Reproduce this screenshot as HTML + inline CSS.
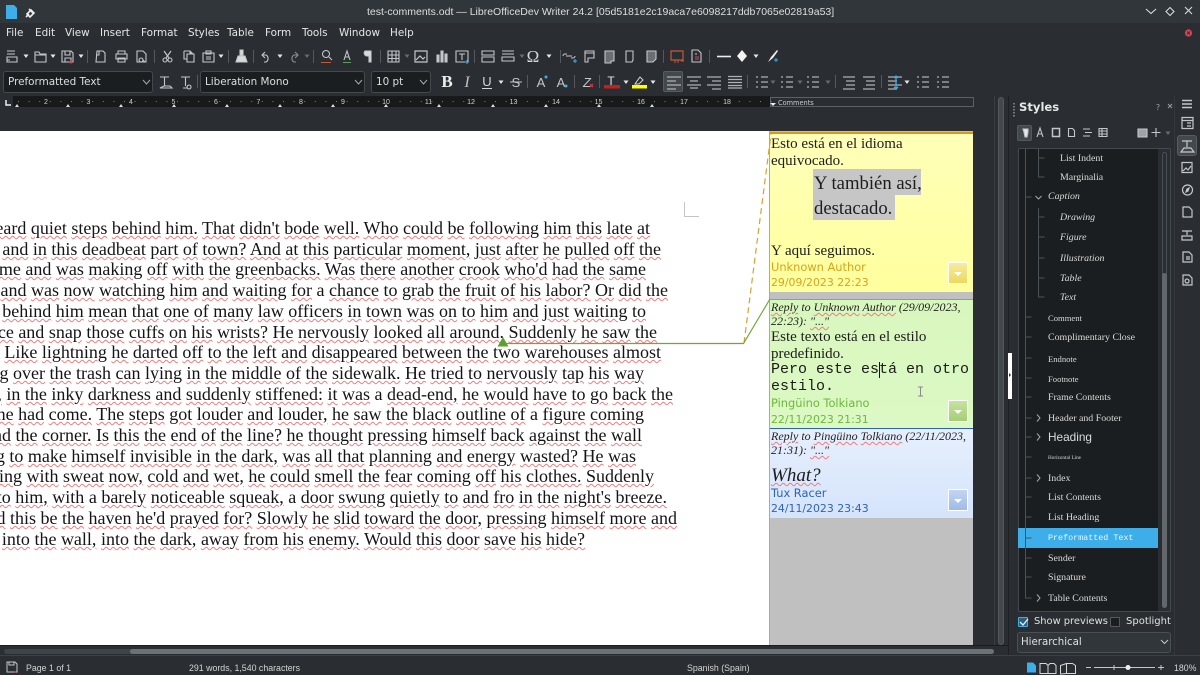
<!DOCTYPE html>
<html><head><meta charset="utf-8"><title>test-comments.odt</title>
<style>
html,body{margin:0;padding:0;width:1200px;height:675px;overflow:hidden;background:#2a2e32}
body{position:relative;font-family:"DejaVu Sans","Liberation Sans",sans-serif;color:#eff0f1}
div{position:absolute;box-sizing:border-box}
.t{white-space:nowrap;line-height:16px;height:16px}
.m{font-size:10.4px;color:#e4e6e7}
.combo{background:#1b1e20;border:1px solid #44494e;border-radius:3px;height:22px;top:71px;font-size:10.4px;line-height:20px;padding-left:4px;color:#dcdedf;white-space:nowrap}
#page{left:0;top:131px;width:769px;height:514px;background:#fff;overflow:hidden}
.l{position:absolute;white-space:nowrap;font:18px/20px "Liberation Serif",serif;color:#141414;height:22px}
u{text-decoration:underline wavy #f27c7c 1px;text-underline-offset:1px}
.c{font-family:"Liberation Serif",serif;color:#1d1d1d;font-size:15px;margin-top:1px}
.r{font-family:"Liberation Serif",serif;color:#222;font-size:12px;font-style:italic}
.a{font-size:11.4px}
.d{font-size:10.9px}
.btn{left:948px;width:20px;height:22px;border:1px solid #fff}
.btn:after{content:"";position:absolute;left:5px;top:9px;border:4px solid transparent;border-top:4px solid #fff;border-bottom:0}
.s{font-family:"Liberation Serif",serif;font-size:9.9px;color:#d8dadb;margin-top:1px}
.i{font-style:italic}
.tiny{font-size:8.6px}
.st{font:8.8px/16px "Liberation Sans",sans-serif;color:#d2d4d5}
</style></head><body>

<!-- title bar -->
<div style="left:0;top:0;width:1200px;height:23px;background:#31363b"></div>
<div class="t" style="left:367px;top:4px;font:10.5px/16px 'Liberation Sans',sans-serif;color:#dcdfe0;width:466px;text-align:center">test-comments.odt — LibreOfficeDev Writer 24.2 [05d5181e2c19aca7e6098217ddb7065e02819a53]</div>

<!-- menu -->
<div class="t m" style="left:6px;top:25px">File</div>
<div class="t m" style="left:35px;top:25px">Edit</div>
<div class="t m" style="left:65px;top:25px">View</div>
<div class="t m" style="left:100px;top:25px">Insert</div>
<div class="t m" style="left:141px;top:25px">Format</div>
<div class="t m" style="left:188px;top:25px">Styles</div>
<div class="t m" style="left:227px;top:25px">Table</div>
<div class="t m" style="left:265px;top:25px">Form</div>
<div class="t m" style="left:302px;top:25px">Tools</div>
<div class="t m" style="left:339px;top:25px">Window</div>
<div class="t m" style="left:390px;top:25px">Help</div>

<!-- combos -->
<div class="combo" style="left:3px;width:150px">Preformatted Text</div>
<div class="combo" style="left:200px;width:165px">Liberation Mono</div>
<div class="combo" style="left:371px;width:60px">10 pt</div>
<div style="left:663px;top:71px;width:20px;height:21px;background:#43484d;border:1px solid #585d62;border-radius:2px"></div>

<!-- ruler -->
<div style="left:0;top:96px;width:770px;height:11px;background:#17191b"></div>
<div style="left:0;top:96px;width:13px;height:11px;background:#2a2e32"></div>
<div style="left:770px;top:97px;width:204px;height:10px;border:1px solid #5c6166;background:#2a2e32"></div>
<div class="t" style="left:771px;top:95px;font-size:6.6px;color:#c8cacc;padding-left:7px">Comments</div>

<!-- page -->
<div id="page">
<div class="l" style="right:119px;top:87px"><u>He</u> <u>heard</u> <u>quiet</u> <u>steps</u> <u>behind</u> <u>him.</u> <u>That</u> <u>didn't</u> <u>bode</u> <u>well.</u> <u>Who</u> <u>could</u> <u>be</u> <u>following</u> <u>him</u> <u>this</u> <u>late</u> <u>at</u></div>
<div class="l" style="right:108px;top:108px"><u>and</u> <u>in</u> <u>this</u> <u>deadbeat</u> <u>part</u> <u>of</u> <u>town?</u> <u>And</u> <u>at</u> <u>this</u> <u>particular</u> <u>moment,</u> <u>just</u> <u>after</u> <u>he</u> <u>pulled</u> <u>off</u> <u>the</u></div>
<div class="l" style="right:123px;top:128px"><u>time</u> <u>and</u> <u>was</u> <u>making</u> <u>off</u> <u>with</u> <u>the</u> <u>greenbacks.</u> <u>Was</u> <u>there</u> <u>another</u> <u>crook</u> <u>who'd</u> <u>had</u> <u>the</u> <u>same</u></div>
<div class="l" style="right:101px;top:149px"><u>and</u> <u>was</u> <u>now</u> <u>watching</u> <u>him</u> <u>and</u> <u>waiting</u> <u>for</u> a <u>chance</u> <u>to</u> <u>grab</u> <u>the</u> <u>fruit</u> <u>of</u> <u>his</u> <u>labor?</u> <u>Or</u> <u>did</u> <u>the</u></div>
<div class="l" style="right:123px;top:170px"><u>behind</u> <u>him</u> <u>mean</u> <u>that</u> <u>one</u> <u>of</u> <u>many</u> <u>law</u> <u>officers</u> <u>in</u> <u>town</u> <u>was</u> <u>on</u> <u>to</u> <u>him</u> <u>and</u> <u>just</u> <u>waiting</u> <u>to</u></div>
<div class="l" style="right:112px;top:191px"><u>police</u> <u>and</u> <u>snap</u> <u>those</u> <u>cuffs</u> <u>on</u> <u>his</u> <u>wrists?</u> <u>He</u> <u>nervously</u> <u>looked</u> <u>all</u> <u>around.</u> <u>Suddenly</u> <u>he</u> <u>saw</u> <u>the</u></div>
<div class="l" style="right:108px;top:211px"><u>Like</u> <u>lightning</u> <u>he</u> <u>darted</u> <u>off</u> <u>to</u> <u>the</u> <u>left</u> <u>and</u> <u>disappeared</u> <u>between</u> <u>the</u> <u>two</u> <u>warehouses</u> <u>almost</u></div>
<div class="l" style="right:125px;top:232px"><u>tripping</u> <u>over</u> <u>the</u> <u>trash</u> <u>can</u> <u>lying</u> <u>in</u> <u>the</u> <u>middle</u> <u>of</u> <u>the</u> <u>sidewalk.</u> <u>He</u> <u>tried</u> <u>to</u> <u>nervously</u> <u>tap</u> <u>his</u> <u>way</u></div>
<div class="l" style="right:96px;top:253px"><u>along,</u> <u>in</u> <u>the</u> <u>inky</u> <u>darkness</u> <u>and</u> <u>suddenly</u> <u>stiffened:</u> <u>it</u> <u>was</u> a <u>dead-end,</u> <u>he</u> <u>would</u> <u>have</u> <u>to</u> <u>go</u> <u>back</u> <u>the</u></div>
<div class="l" style="right:125px;top:273px"><u>the</u> <u>he</u> <u>had</u> <u>come.</u> <u>The</u> <u>steps</u> <u>got</u> <u>louder</u> <u>and</u> <u>louder,</u> <u>he</u> <u>saw</u> <u>the</u> <u>black</u> <u>outline</u> <u>of</u> a <u>figure</u> <u>coming</u></div>
<div class="l" style="right:127px;top:294px"><u>around</u> <u>the</u> <u>corner.</u> <u>Is</u> <u>this</u> <u>the</u> <u>end</u> <u>of</u> <u>the</u> <u>line?</u> <u>he</u> <u>thought</u> <u>pressing</u> <u>himself</u> <u>back</u> <u>against</u> <u>the</u> <u>wall</u></div>
<div class="l" style="right:133px;top:315px"><u>trying</u> <u>to</u> <u>make</u> <u>himself</u> <u>invisible</u> <u>in</u> <u>the</u> <u>dark,</u> <u>was</u> <u>all</u> <u>that</u> <u>planning</u> <u>and</u> <u>energy</u> <u>wasted?</u> <u>He</u> <u>was</u></div>
<div class="l" style="right:115px;top:335px"><u>dripping</u> <u>with</u> <u>sweat</u> <u>now,</u> <u>cold</u> <u>and</u> <u>wet,</u> <u>he</u> <u>could</u> <u>smell</u> <u>the</u> <u>fear</u> <u>coming</u> <u>off</u> <u>his</u> <u>clothes.</u> <u>Suddenly</u></div>
<div class="l" style="right:102px;top:356px"><u>to</u> <u>him,</u> <u>with</u> a <u>barely</u> <u>noticeable</u> <u>squeak,</u> a <u>door</u> <u>swung</u> <u>quietly</u> <u>to</u> <u>and</u> <u>fro</u> <u>in</u> <u>the</u> <u>night's</u> <u>breeze.</u></div>
<div class="l" style="right:92px;top:377px"><u>Could</u> <u>this</u> <u>be</u> <u>the</u> <u>haven</u> <u>he'd</u> <u>prayed</u> <u>for?</u> <u>Slowly</u> <u>he</u> <u>slid</u> <u>toward</u> <u>the</u> <u>door,</u> <u>pressing</u> <u>himself</u> <u>more</u> <u>and</u></div>
<div class="l" style="right:184px;top:398px"><u>into</u> <u>the</u> <u>wall,</u> <u>into</u> <u>the</u> <u>dark,</u> <u>away</u> <u>from</u> <u>his</u> <u>enemy.</u> <u>Would</u> <u>this</u> <u>door</u> <u>save</u> <u>his</u> <u>hide?</u></div>
<div style="left:684px;top:71px;width:15px;height:15px;border-left:1px solid #c4c4c4;border-bottom:1px solid #c4c4c4"></div>
</div>

<!-- comments column -->
<div style="left:769px;top:131px;width:204px;height:514px;background:#c0c0c0;border-left:1px solid #a9a9a9"></div>
<div style="left:770px;top:132px;width:203px;height:160px;background:linear-gradient(#ffffb9,#ffff9e);border-top:2px solid #d09a1c"></div>
<div style="left:770px;top:299px;width:203px;height:129px;background:linear-gradient(#d8f7bd,#dcf8c4);border-top:1px solid #78b848"></div>
<div style="left:770px;top:428px;width:203px;height:90px;background:linear-gradient(#e6effd,#d5e4fb);border-top:1px solid #2d5fb5"></div>

<div class="t c" style="left:771px;top:135px">Esto está en el idioma</div>
<div class="t c" style="left:771px;top:152px">equivocado.</div>
<div style="left:813px;top:169px;width:108px;height:26px;background:#c6c6c6"></div>
<div style="left:813px;top:195px;width:82px;height:25px;background:#c6c6c6"></div>
<div class="t c" style="left:814px;top:175px;font-size:18.7px">Y también así,</div>
<div class="t c" style="left:814px;top:200px;font-size:18.7px">destacado.</div>
<div class="t c" style="left:771px;top:242px">Y aquí seguimos.</div>
<div class="t a" style="left:771px;top:259px;color:#d7a31f">Unknown Author</div>
<div class="t a d" style="left:771px;top:275px;color:#d7a31f">29/09/2023 22:23</div>
<div class="btn" style="top:262px;background:linear-gradient(#f7eb9c,#ecd95f)"></div>

<div class="t r" style="left:771px;top:299px"><u>Reply</u> to <u>Unknown</u> <u>Author</u> (29/09/2023,</div>
<div class="t r" style="left:771px;top:313px">22:23): <u>"..."</u></div>
<div class="t c" style="left:771px;top:328px">Este texto está en el estilo</div>
<div class="t c" style="left:771px;top:345px">predefinido.</div>
<div class="t" style="left:771px;top:362px;font:15px/16px 'Liberation Mono',monospace;color:#1a1a1a">Pero este está en otro</div>
<div class="t" style="left:771px;top:379px;font:15px/16px 'Liberation Mono',monospace;color:#1a1a1a">estilo.</div>
<div style="left:879px;top:362px;width:1px;height:16px;background:#111"></div>
<div class="t a" style="left:771px;top:395px;color:#6cb83e">Pingüino Tolkiano</div>
<div class="t a d" style="left:771px;top:412px;color:#6cb83e">22/11/2023 21:31</div>
<div class="btn" style="top:400px;background:linear-gradient(#c5e39f,#a5cf74)"></div>

<div class="t r" style="left:771px;top:428px"><u>Reply</u> to <u>Pingüino</u> <u>Tolkiano</u> (22/11/2023,</div>
<div class="t r" style="left:771px;top:442px">21:31): <u>"..."</u></div>
<div class="t" style="left:771px;top:467px;font:italic 19px/18px 'Liberation Serif',serif;color:#1d1d1d;height:20px"><u>What?</u></div>
<div class="t a" style="left:771px;top:485px;color:#2c63ba">Tux Racer</div>
<div class="t a d" style="left:771px;top:501px;color:#2c63ba">24/11/2023 23:43</div>
<div class="btn" style="top:489px;background:linear-gradient(#c3d5f2,#9fbbe6)"></div>

<!-- doc scrollbars -->
<div style="left:994px;top:96px;width:1px;height:552px;background:#3a3f44"></div>
<div style="left:998px;top:97px;width:6px;height:548px;border:1px solid #54595e;border-radius:3px;background:#43484d"></div>
<div style="left:1008px;top:96px;width:1px;height:559px;background:#1e2124"></div>
<div style="left:1008px;top:353px;width:4px;height:46px;background:#fff"></div>
<div style="left:0;top:645px;width:1008px;height:10px;background:#2a2e32;border-top:1px solid #1a1c1e"></div>
<div style="left:4px;top:649px;width:990px;height:5px;border-radius:3px;background:#3f4449"></div>
<div style="left:130px;top:649px;width:864px;height:5px;border-radius:3px;background:#6c7176"></div>
<div style="left:0;top:655px;width:1200px;height:1px;background:#3b4045"></div>

<!-- sidebar -->
<div style="left:1174px;top:96px;width:1px;height:559px;background:#33383c"></div>
<div class="t" style="left:1019px;top:99px;font-size:11.6px;font-weight:bold;color:#e6e8e9">Styles</div>
<div style="left:1017px;top:125px;width:15px;height:16px;background:#43484d;border:1px solid #55595e;border-radius:2px"></div>
<div style="left:1177px;top:135px;width:20px;height:21px;background:#43484d;border:1px solid #585d62;border-radius:3px"></div>
<div style="left:1018px;top:148px;width:153px;height:464px;background:#1b1e20;border:1px solid #44494e;border-radius:2px"></div>
<div style="left:1158px;top:149px;width:12px;height:462px;background:#2a2e32"></div>
<div style="left:1162px;top:152px;width:5px;height:456px;border:1px solid #4a4f54;border-radius:3px"></div>
<div style="left:1162px;top:273px;width:5px;height:335px;background:#62676c;border-radius:3px"></div>
<div style="left:1018px;top:528px;width:140px;height:20px;background:#3daee9"></div>

<div class="t s" style="left:1060px;top:150px">List Indent</div>
<div class="t s" style="left:1060px;top:169px">Marginalia</div>
<div class="t s i" style="left:1048px;top:188px">Caption</div>
<div class="t s i" style="left:1060px;top:209px">Drawing</div>
<div class="t s i" style="left:1060px;top:229px">Figure</div>
<div class="t s i" style="left:1060px;top:250px">Illustration</div>
<div class="t s i" style="left:1060px;top:270px">Table</div>
<div class="t s i" style="left:1060px;top:289px">Text</div>
<div class="t s tiny" style="left:1048px;top:309px">Comment</div>
<div class="t s" style="left:1048px;top:329px">Complimentary Close</div>
<div class="t s tiny" style="left:1048px;top:350px">Endnote</div>
<div class="t s tiny" style="left:1048px;top:370px">Footnote</div>
<div class="t s" style="left:1048px;top:389px">Frame Contents</div>
<div class="t s" style="left:1048px;top:410px">Header and Footer</div>
<div class="t s" style="left:1048px;top:428px;font:11.8px/16px 'Liberation Sans',sans-serif">Heading</div>
<div class="t s" style="left:1048px;top:449px;font-size:5.2px">Horizontal Line</div>
<div class="t s" style="left:1048px;top:470px">Index</div>
<div class="t s" style="left:1048px;top:489px">List Contents</div>
<div class="t s" style="left:1048px;top:509px">List Heading</div>
<div class="t" style="left:1048px;top:530px;font:8.4px/16px 'Liberation Mono',monospace;color:#eaf6fd">Preformatted Text</div>
<div class="t s" style="left:1048px;top:550px">Sender</div>
<div class="t s" style="left:1048px;top:569px">Signature</div>
<div class="t s" style="left:1048px;top:590px">Table Contents</div>

<div style="left:1018px;top:617px;width:10px;height:10px;background:#2a5f80;border:1px solid #3daee9;border-radius:1px"></div>
<div class="t" style="left:1034px;top:614px;font-size:9.9px;color:#dfe1e2">Show previews</div>
<div style="left:1110px;top:617px;width:10px;height:10px;background:#1b1e20;border:1px solid #55595e;border-radius:1px"></div>
<div class="t" style="left:1126px;top:614px;font-size:10px;color:#dfe1e2">Spotlight</div>
<div style="left:1017px;top:632px;width:154px;height:21px;background:#31363b;border:1px solid #4a4f54;border-radius:3px"></div>
<div class="t" style="left:1021px;top:635px;font-size:10.2px;color:#dfe1e2">Hierarchical</div>

<!-- status -->
<div class="t st" style="left:26px;top:660px">Page 1 of 1</div>
<div class="t st" style="left:189px;top:660px">291 words, 1,540 characters</div>
<div class="t st" style="left:687px;top:660px">Spanish (Spain)</div>
<div class="t st" style="left:1174px;top:660px">180%</div>

<!-- graphics overlay -->
<svg width="1200" height="675" viewBox="0 0 1200 675" style="position:absolute;left:0;top:0" fill="none" stroke-linecap="butt">
<defs>
<path id="ar" d="M-2.5-1.5h5L0 2z" fill="#e6e8e9"/>
<path id="ard" d="M-2.5-1.5h5L0 2z" fill="#666b70"/>
<g id="al" stroke="#aeb1b3" stroke-width="1.3"><path d="M0 1h14M0 5h9M0 9h14M0 13h9"/></g>
<g id="ar2" stroke="#aeb1b3" stroke-width="1.3"><path d="M0 1h14M5 5h9M0 9h14M5 13h9"/></g>
<g id="ls" stroke="#aeb1b3" stroke-width="1.3"><path d="M0 1h2M5 1h7M0 6h2M5 6h7M0 11h2M5 11h7"/></g>
<g id="par" stroke="#aeb1b3" stroke-width="1.3"><path d="M0 1h12M3 5h9M3 9h9M0 13h12"/></g>
</defs>

<!-- title icons -->
<path d="M6 5h8l3 3v11H6z" fill="#3daee9"/>
<path d="M27 14l4-4 3 3-4 4zM29 9l5 5M26 17l3-3" stroke="#eceeef" stroke-width="1.6"/>
<path d="M1146 9l5 4.5 5-4.5" stroke="#d8dadb" stroke-width="1.1"/>
<path d="M1170 7.500l4 4-4 4-4-4z" stroke="#d8dadb" stroke-width="1.1"/>
<path d="M1185 7l7 7M1192 7l-7 7" stroke="#d8dadb" stroke-width="1.1"/>
<circle cx="1188.500" cy="33" r="3.600" fill="#da4453"/>
<path d="M1187 31.500l3 3M1190 31.500l-3 3" stroke="#31363b"/>

<!-- toolbar 1 -->
<g stroke="#c4c7c9" stroke-width="1.1">
<path d="M7 51h8M7 54h8M7 57h10v5H7zM7 60h3"/>
<path d="M35 52h4l1 2h6v8H35zM35 55h11"/>
<path d="M62 51h9l2 2v9H62zM65 51v4h5v-4M65 62v-4h6v4"/>
<path d="M97 51h6l2 2v9h-9zM99 51v4h-3"/>
<path d="M118 54v-3h7v3M116 54h11v5h-11zM118 58h7v4h-7z"/>
<path d="M137 51h6l3 3v8h-9zM141 58a2 2 0 1 0 .1 0M143 60l2 2"/>
<path d="M164 51l5 7M171 51l-5 7" stroke-width="1.2"/><circle cx="165" cy="60" r="2"/><circle cx="170" cy="60" r="2"/>
<path d="M184 51h6l2 2h-2v-2M184 51v8h3M188 54h6l0 8h-7v-8z"/>
<path d="M203 53h11v9h-11zM206 51h5v3h-5zM206 57h5M206 59h5"/>
<path d="M240 50h3v5h-3z" fill="#d8dadb"/><path d="M236 62l2-6h7l2 6z" fill="#d8dadb"/>
<path d="M265 52l-3 3 3 3M262 55h4a4 4 0 0 1 0 7h-2"/>
<path d="M295 52l3 3-3 3M298 55h-4a4 4 0 0 0 0 7h2" stroke="#8b8f93"/>
<circle cx="326" cy="54" r="3.500"/><path d="M329 57l3 3"/>
<path d="M344 60l3-9 3 9M345 57h4"/>
<path d="M365 51h6v11h-2v-6h-2a3 3 0 0 1-2-5z" fill="#d8dadb"/>
<path d="M388 51h11v11h-11zM388 55h11M388 58.500h11M392 51v11M396 51v11"/>
<path d="M415 51h12v11h-12zM416 60l4-4 3 3 2-2" stroke-width="1.2"/>
<path d="M437 62v-7h2v7zM441 62v-11h2v11zM445 62v-8h2v8z" fill="#c4c7c9"/>
<path d="M456 51h12v11h-12zM459 54h6M462 54v6"/>
<path d="M482 51h12v4h-12zM482 57h12v5h-12z"/>
<path d="M502 51h12M502 54h12M502 57h12v4h-12z"/>
<path d="M563 56a2 2 0 0 1 2-2h2M575 56a2 2 0 0 1-2 2h-2M566 56h6"/>
<path d="M585 51h9v2h-9zM585 51v11h3v-4h6v-5"/>
<path d="M605 51h9v10h-3v2h-6z" fill="#6b6f73"/>
<path d="M626 51h7v9l-1 2h-6z"/>
<path d="M647 51h9v8l-3 3h-6z" fill="#6b6f73"/>
<path d="M692 50h6l3 3v9h-9zM695 54h2M695 57h4M695 59h4"/>
</g>
<path d="M321 62.500h10" stroke="#c45a35"/>
<path d="M343 62.500h8" stroke="#5aa35a"/>
<path d="M671 51h12v9h-12z" stroke="#c45a35" stroke-width="1.2"/>
<path d="M695 57h4M695 59h4" stroke="#da4453"/>
<path d="M717 56.500h14" stroke="#eceeef" stroke-width="1.600"/>
<path d="M742 50l5 6-5 6-5-6z" fill="#f4f5f5"/>
<path d="M768 62l3-5 6-7 1 1-5 7z" fill="#eceeef"/>
<circle cx="71" cy="62" r="1.500" fill="#da4453"/>
<g stroke="#3daee9"><path d="M465 62h4M467 60v4"/><path d="M573 61h4M575 59v4"/><path d="M774 60h4M776 58v4"/></g>
<path d="M678 60v3M675 60v3M681 61h3" stroke="#c45a35"/>
<g transform="translate(0,56)">
<use href="#ar" x="26"/><use href="#ar" x="53"/><use href="#ar" x="81"/><use href="#ar" x="221"/><use href="#ar" x="280"/><use href="#ard" x="307"/><use href="#ard" x="407"/><use href="#ard" x="522"/><use href="#ar" x="549"/><use href="#ar" x="756"/>
</g>
<text x="533" y="62" font-family="Liberation Serif" font-size="17" fill="#d5d7d8" text-anchor="middle">Ω</text>
<g stroke="#55595e"><path d="M87.500 50v13M154.500 50v13M228.500 50v13M253.500 50v13M313.500 50v13M380.500 50v13M474.500 50v13M560.500 50v13M663.500 50v13M709.500 50v13M527.500 75v13M574.500 75v13M599.500 75v13M747.500 75v13M835.500 75v13M881.500 75v13M197.500 75v13"/></g>

<!-- toolbar 2 -->
<path d="M143 80l3.500 4 3.500-4M355 80l3.500 4 3.500-4M420 80l3.500 4 3.500-4" stroke="#a6a9ac" stroke-width="1"/>
<g stroke="#c4c7c9" stroke-width="1.100"><path d="M160 77h9M164.500 77v9M160 88l4-2h6l2 2z"/><path d="M181 77h9M185.500 77v9M183 88h4M189 85a2 2 0 1 0 .1 0"/></g>
<text x="447" y="87" font-family="Liberation Serif" font-weight="bold" font-size="17" fill="#eceeef" text-anchor="middle">B</text>
<text x="467" y="87" font-family="Liberation Serif" font-style="italic" font-size="16" fill="#bfc2c4" text-anchor="middle">I</text>
<text x="487" y="86" font-family="Liberation Sans" font-size="13" fill="#d5d7d8" text-anchor="middle">U</text>
<path d="M482 88.500h10" stroke="#d5d7d8"/>
<text x="516" y="87" font-family="Liberation Sans" font-size="13" fill="#c4c7c9" text-anchor="middle">S</text>
<path d="M510 82h12" stroke="#c4c7c9"/>
<text x="541" y="87" font-family="Liberation Sans" font-size="13" fill="#c4c7c9" text-anchor="middle">A</text>
<text x="561" y="87" font-family="Liberation Sans" font-size="13" fill="#c4c7c9" text-anchor="middle">A</text>
<circle cx="546" cy="77" r="1.500" fill="#3daee9"/><circle cx="566" cy="86" r="1.500" fill="#3daee9"/>
<text x="587" y="87" font-family="Liberation Sans" font-style="italic" font-size="13" fill="#c4c7c9" text-anchor="middle">Z</text>
<path d="M590 84l3 3M593 84l-3 3" stroke="#da4453"/>
<text x="611" y="85" font-family="Liberation Sans" font-size="12" fill="#e2e4e5" text-anchor="middle">T</text>
<rect x="604" y="85" width="16" height="3.500" fill="#c3201e"/>
<path d="M635 84l5-7 3 3-4 4z" stroke="#d5d7d8"/>
<rect x="632" y="85" width="15" height="3.500" fill="#ffff00"/>
<g transform="translate(0,82)"><use href="#ar" x="501"/><use href="#ar" x="626"/><use href="#ar" x="653"/><use href="#ard" x="773"/><use href="#ard" x="800"/><use href="#ard" x="828"/><use href="#ar" x="907"/></g>
<use href="#al" x="667" y="76"/>
<g stroke="#aeb1b3" stroke-width="1.300"><path d="M687 77h14M690 81h8M687 85h14M690 88h8"/></g>
<use href="#ar2" x="707" y="76"/>
<g stroke="#aeb1b3" stroke-width="1.300"><path d="M728 76.500h14M728 79.500h14M728 82.500h14M728 85.500h14M728 88h14"/></g>
<use href="#ls" x="756" y="76"/><use href="#ls" x="781" y="76"/><use href="#ls" x="807" y="76"/>
<use href="#par" x="843" y="76"/><use href="#par" x="863" y="76"/>
<use href="#al" x="888" y="76"/>
<path d="M896 76v13M894 78l2-2 2 2M894 87l2 2 2-2" stroke="#3daee9" stroke-width="1.300"/>
<use href="#ls" x="917" y="76"/><use href="#ls" x="937" y="76"/>

<!-- ruler marks -->
<g fill="#d0d2d4" font-family="Liberation Sans" font-size="7" text-anchor="middle">
<text x="46" y="104">2</text><text x="88.500" y="104">3</text><text x="131" y="104">4</text><text x="173.500" y="104">5</text><text x="216" y="104">6</text><text x="258.500" y="104">7</text><text x="301" y="104">8</text><text x="343" y="104">9</text><text x="386" y="104">10</text><text x="428.500" y="104">11</text><text x="471" y="104">12</text><text x="513.500" y="104">13</text><text x="556" y="104">14</text><text x="598.500" y="104">15</text><text x="641" y="104">16</text><text x="684" y="104">17</text><text x="727" y="104">18</text>
</g>
<path d="M18 101.500h762" stroke="#7b7f83" stroke-dasharray="1 9.600"/>
<path d="M6 100v5h5" stroke="#eceeef" stroke-width="1.500"/>
<g fill="#dcdedf"><path d="M15 107l2-3 2 3zM66 107l2-3 2 3zM119 107l2-3 2 3zM172 107l2-3 2 3zM225 107l2-3 2 3zM278 107l2-3 2 3zM331 107l2-3 2 3zM384 107l2-3 2 3zM437 107l2-3 2 3zM491 107l2-3 2 3zM544 107l2-3 2 3zM597 107l2-3 2 3zM650 107l2-3 2 3z"/></g>
<path d="M770 103h6l-3 3z" fill="#eceeef"/>

<!-- anchors -->
<path d="M744 343L771 134" stroke="#d8a32a" stroke-width="1.200" stroke-dasharray="6 4"/>
<path d="M503 343.500H743.500L770 299" stroke="#6fa63f" stroke-width="1.200"/>
<path d="M497.500 346.500L503 337l5.500 9.500z" fill="#5ea02b"/>
<path d="M918 387h5M918 396h5M920.500 387v9" stroke="#8a8a8a" stroke-width="1"/>

<!-- sidebar handle + tree -->
<path d="M1014 103v14" stroke="#c4c7c9" stroke-dasharray="1.500 1.500"/>
<path d="M1009 373l2 2-2 2z" fill="#333"/>
<text x="1158" y="110" font-size="8" fill="#9a9da0" font-family="DejaVu Sans" text-anchor="middle">?</text>
<path d="M1168 104l4 4M1172 104l-4 4" stroke="#9a9da0"/>
<g stroke="#c4c7c9" stroke-width="1.100">
<path d="M1023 129h5v3l-1 5h-2l-1-5z" fill="#e6e8e9"/>
<path d="M1037 137l3-9 3 9M1038 134h4"/>
<rect x="1052.500" y="128.500" width="7" height="8" stroke-width="1.500"/>
<path d="M1068.500 128.500h4l2 2v6h-6z"/>
<path d="M1083 129h7M1085 132.500h7M1083 136h7"/>
<path d="M1099 128.500h8v8h-8zM1099 131h8M1099 134h8M1102 128.500v8"/>
<path d="M1138 129h9v8h-9z" fill="#a0a3a6"/>
<path d="M1156 128v9M1151.500 132.500h9"/>
</g>
<use href="#ard" x="1168" y="133"/>
<g stroke="#4c5156" stroke-width="1">
<path d="M1025.500 149v449h6M1025.500 197h6M1025.500 317h6M1025.500 337h6M1025.500 358h6M1025.500 378h6M1025.500 397h6M1025.500 418h6M1025.500 437h6M1025.500 457h6M1025.500 478h6M1025.500 497h6M1025.500 517h6M1025.500 538h6M1025.500 558h6M1025.500 577h6"/>
<path d="M1038.500 149v28h6M1038.500 158h6M1038.500 208v89h6M1038.500 217h6M1038.500 237h6M1038.500 258h6M1038.500 278h6"/>
</g>
<g stroke="#a6a9ac" stroke-width="1">
<path d="M1035.500 196l3 3 3-3M1037 414.500l3 3.500-3 3.500M1037 433.500l3 3.500-3 3.500M1037 474.500l3 3.500-3 3.500M1037 594.500l3 3.500-3 3.500"/>
</g>
<path d="M1020 622l3 3 5-6" stroke="#eff0f1" stroke-width="1.300"/>
<path d="M1161 640l3.500 3.500 3.500-3.500" stroke="#c4c7c9"/>

<!-- deck icons -->
<g stroke="#c4c7c9" stroke-width="1.200">
<path d="M1182 100.500h10M1182 104h10M1182 107.500h10" stroke-width="1.500"/>
<path d="M1182 117.500h11v11h-11zM1182 120.500h11M1187 123h4M1187 126h4"/>
<path d="M1182 141h10M1187 141v6M1181 152l3-4h7l3 4z"/>
<path d="M1182 162.500h10v10h-10zM1183 171l3-3 2 2 3-4"/>
<circle cx="1187.500" cy="190" r="5"/><path d="M1186 192l1-3 2-1-1 3z" fill="#c4c7c9"/>
<path d="M1183 207h6l3 3v7h-9z"/>
<path d="M1182 231h10M1187 231v4M1182 240v-4h10v4z"/>
<path d="M1183 252h6l3 3v7h-9zM1186 257h4M1186 259h4"/>
<path d="M1183 275h6l3 3v7h-9zM1187 279a2 2 0 1 0 .1 0"/>
</g>

<!-- status icons -->
<path d="M7 662h8l2 2v8H7zM9 662v3h5v-3" stroke="#c4c7c9"/><circle cx="15" cy="672" r="1" fill="#da4453"/>
<path d="M1027 662.500h6l3 3v7h-9z" fill="#3daee9"/>
<g stroke="#d5d7d8"><path d="M1040 663.500h6l2 2v8h-8zM1048 665.500v8h8v-8l-2-2h-4z"/><path d="M1060.500 665.500l6-2v10l-6 .5zM1066.500 663.500h6l3 2v8h-9"/></g>
<path d="M1086 667.500h5M1158 667.500h6M1161 665v5M1094 667.500h61" stroke="#c4c7c9"/>
<path d="M1114 665v5" stroke="#c4c7c9"/><circle cx="1128" cy="667.500" r="2.500" fill="#eceeef"/>
</svg>
</body></html>
